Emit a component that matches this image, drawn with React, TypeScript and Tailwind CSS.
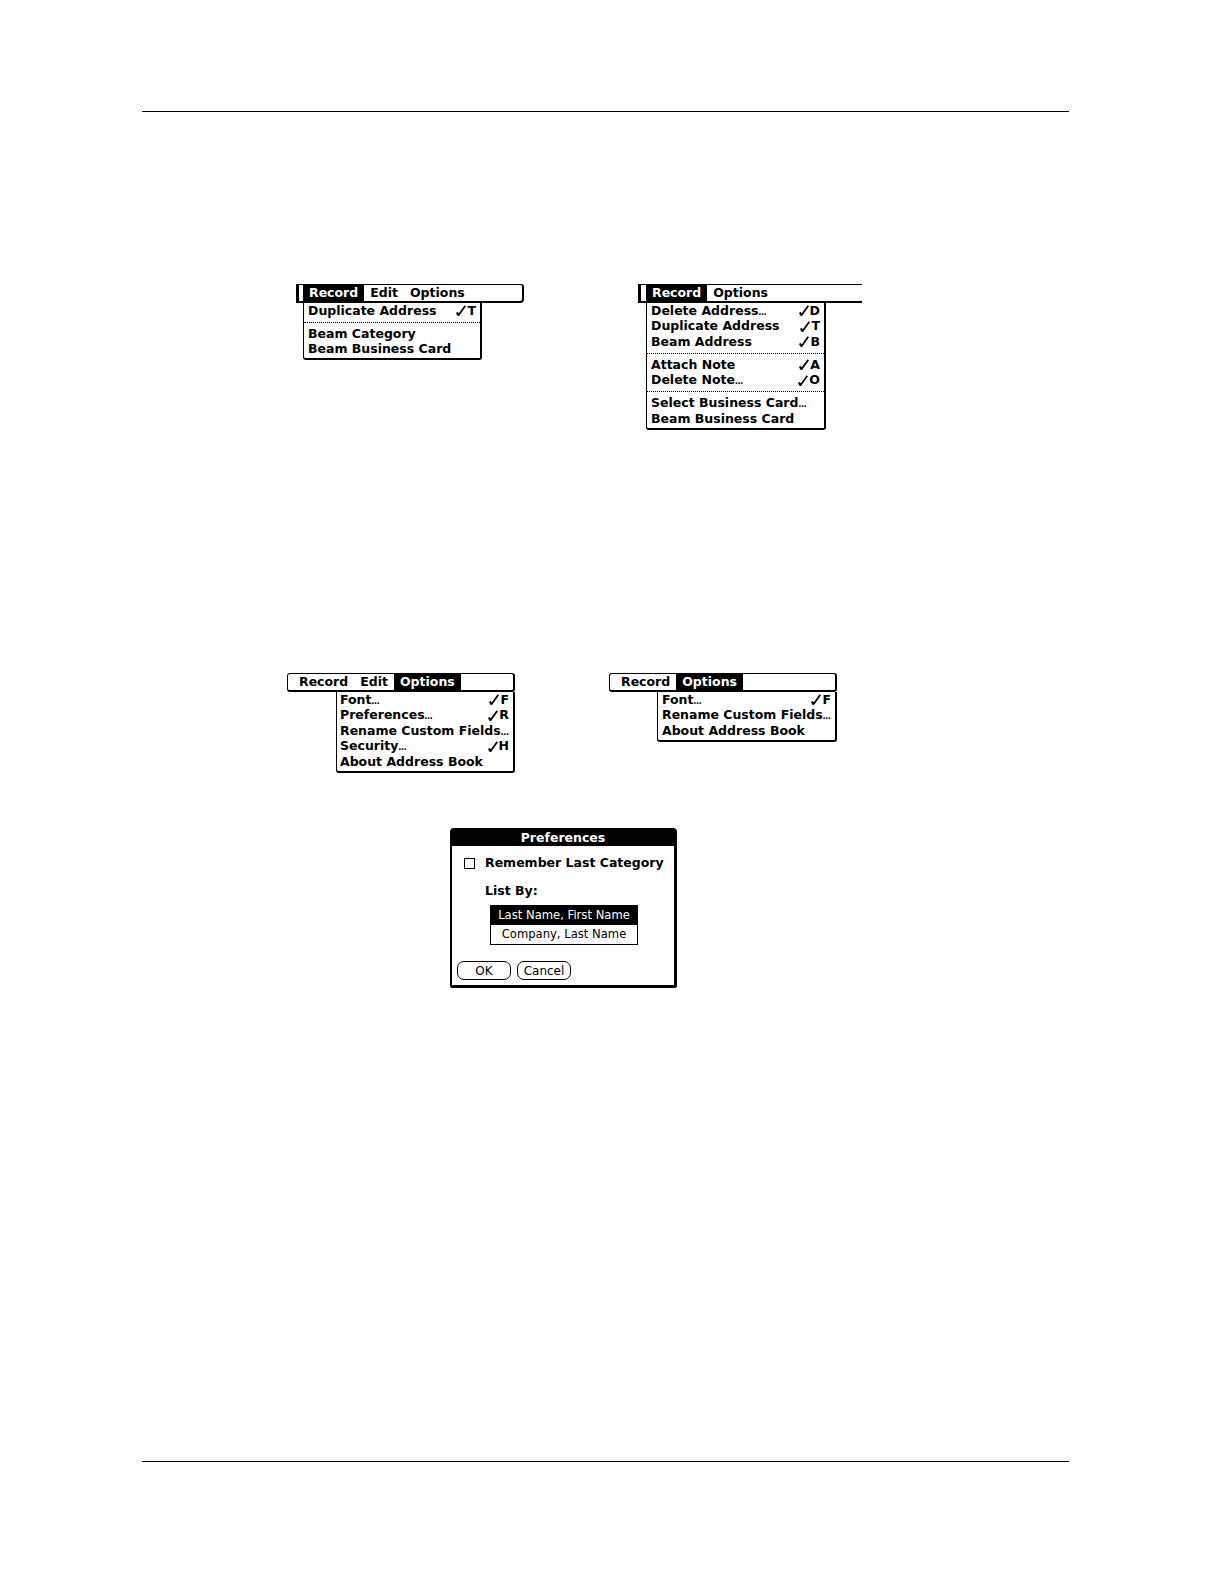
import React from 'react';

const FONT = "font-['DejaVu_Sans',sans-serif]";

function Stroke() {
  return (
    <svg width="10" height="11" viewBox="0 0 10 11" className="block">
      <path d="M1 7.6 L2.7 10 L9.3 0.8" stroke="black" strokeWidth="1.8" fill="none" strokeLinejoin="round" />
      <path d="M0.3 7.8 L1.8 7.4 L3.2 9.6 L2.4 10.8 L1 10.6 Z" fill="black" />
    </svg>
  );
}

type Entry = { label: string; sc?: string; dots?: boolean } | 'sep';

function Label({ text, dots }: { text: string; dots?: boolean }) {
  return (
    <span className="whitespace-nowrap">
      {text}
      {dots && <span className="text-[8px]">…</span>}
    </span>
  );
}

function Item({ label, sc, dots, pl }: { label: string; sc?: string; dots?: boolean; pl: string }) {
  return (
    <div className={`flex h-[15.5px] items-center justify-between pr-[4px] leading-none ${pl}`}>
      <Label text={label} dots={dots} />
      {sc && (
        <span className="flex items-center gap-[1px]">
          <Stroke />
          <span>{sc}</span>
        </span>
      )}
    </div>
  );
}

function Sep() {
  return (
    <div className="flex h-[7.5px] items-center">
      <div className="w-full border-t border-dotted border-black" />
    </div>
  );
}

function Title({ text, active }: { text: string; active?: boolean }) {
  return (
    <div className={`flex items-center px-[6px] ${active ? 'bg-black text-white' : ''}`}>{text}</div>
  );
}

function Menu({
  titles,
  active,
  barClass,
  barPad,
  dropClass,
  itemPad,
  entries,
}: {
  titles: string[];
  active: string;
  barClass: string;
  barPad: string;
  dropClass: string;
  itemPad: string;
  entries: Entry[];
}) {
  return (
    <div className={`flex flex-col text-[12.5px] font-bold text-black ${FONT}`}>
      <div className={`flex h-[19px] items-stretch border-black leading-none ${barClass} ${barPad}`}>
        {titles.map((t) => (
          <Title key={t} text={t} active={t === active} />
        ))}
      </div>
      <div className={`flex flex-col border-l border-r-2 border-b-2 border-black bg-white pb-[1px] ${dropClass}`}>
        {entries.map((e, i) =>
          e === 'sep' ? <Sep key={i} /> : <Item key={i} label={e.label} sc={e.sc} dots={e.dots} pl={itemPad} />
        )}
      </div>
    </div>
  );
}

function Preferences() {
  return (
    <div
      className={`flex h-[160px] w-[227px] flex-col rounded-t-[4px] rounded-b-[2px] border-2 border-r-[3px] border-b-[3px] border-black bg-white text-black ${FONT}`}
    >
      <div className="flex h-[16px] items-center justify-center bg-black text-[12.5px] font-bold leading-none text-white">
        Preferences
      </div>
      <div className="flex items-center pt-[12px] pl-[12px] text-[12.5px] font-bold leading-none">
        <div className="h-[11px] w-[11px] border border-black" />
        <span className="ml-[10px] mt-[-1px] whitespace-nowrap">Remember Last Category</span>
      </div>
      <div className="pt-[15px] pl-[33px] text-[12.5px] font-bold leading-none">List By:</div>
      <div className="ml-[38px] mt-[8px] flex w-[148px] flex-col border border-black text-[11.6px] leading-none">
        <div className="flex h-[19px] items-center justify-center whitespace-nowrap bg-black text-white">
          Last Name, First Name
        </div>
        <div className="flex h-[19px] items-center justify-center whitespace-nowrap">Company, Last Name</div>
      </div>
      <div className="mt-[16px] flex gap-[6px] pl-[5px] text-[12px] leading-none">
        <div className="flex h-[19px] w-[54px] items-center justify-center rounded-[7px] border border-black">OK</div>
        <div className="flex h-[19px] w-[54px] items-center justify-center rounded-[7px] border border-black">
          Cancel
        </div>
      </div>
    </div>
  );
}

export default function App() {
  return (
    <div className="h-[1584px] w-[1224px] bg-white">
      <div className="h-[111px]" />
      <div className="ml-[142px] h-px w-[927px] bg-black" />
      <div className="h-[172px]" />

      <div className="flex h-[389px] items-start pl-[296px]">
        <Menu
          titles={['Record', 'Edit', 'Options']}
          active="Record"
          barClass="w-[228px] border-t border-b-2 border-r-2 border-l-[3px] rounded-tr-[3px] rounded-br-[4px]"
          barPad="pl-[4px]"
          dropClass="ml-[7px] w-[179px] rounded-b-[3px]"
          itemPad="pl-[4px]"
          entries={[{ label: 'Duplicate Address', sc: 'T' }, 'sep', { label: 'Beam Category' }, { label: 'Beam Business Card' }]}
        />
        <div className="ml-[114px]">
          <Menu
            titles={['Record', 'Options']}
            active="Record"
            barClass="w-[224px] border-t border-b-2 border-l-[3px]"
            barPad="pl-[5px]"
            dropClass="ml-[8px] w-[180px] rounded-b-[3px]"
            itemPad="pl-[4px]"
            entries={[
              { label: 'Delete Address', sc: 'D', dots: true },
              { label: 'Duplicate Address', sc: 'T' },
              { label: 'Beam Address', sc: 'B' },
              'sep',
              { label: 'Attach Note', sc: 'A' },
              { label: 'Delete Note', sc: 'O', dots: true },
              'sep',
              { label: 'Select Business Card', dots: true },
              { label: 'Beam Business Card' },
            ]}
          />
        </div>
      </div>

      <div className="flex h-[155px] items-start pl-[287px]">
        <Menu
          titles={['Record', 'Edit', 'Options']}
          active="Options"
          barClass="w-[228px] border border-b-2 border-r-2 rounded-[3px]"
          barPad="pl-[5px]"
          dropClass="ml-[49px] w-[179px] rounded-b-[3px]"
          itemPad="pl-[3px]"
          entries={[
            { label: 'Font', sc: 'F', dots: true },
            { label: 'Preferences', sc: 'R', dots: true },
            { label: 'Rename Custom Fields', dots: true },
            { label: 'Security', sc: 'H', dots: true },
            { label: 'About Address Book' },
          ]}
        />
        <div className="ml-[94px]">
          <Menu
            titles={['Record', 'Options']}
            active="Options"
            barClass="w-[228px] border border-b-2 border-r-2 rounded-[3px]"
            barPad="pl-[5px]"
            dropClass="ml-[48px] w-[180px] rounded-b-[3px]"
            itemPad="pl-[4px]"
            entries={[
              { label: 'Font', sc: 'F', dots: true },
              { label: 'Rename Custom Fields', dots: true },
              { label: 'About Address Book' },
            ]}
          />
        </div>
      </div>

      <div className="flex h-[633px] items-start pl-[450px]">
        <Preferences />
      </div>

      <div className="ml-[142px] h-px w-[927px] bg-black" />
    </div>
  );
}
